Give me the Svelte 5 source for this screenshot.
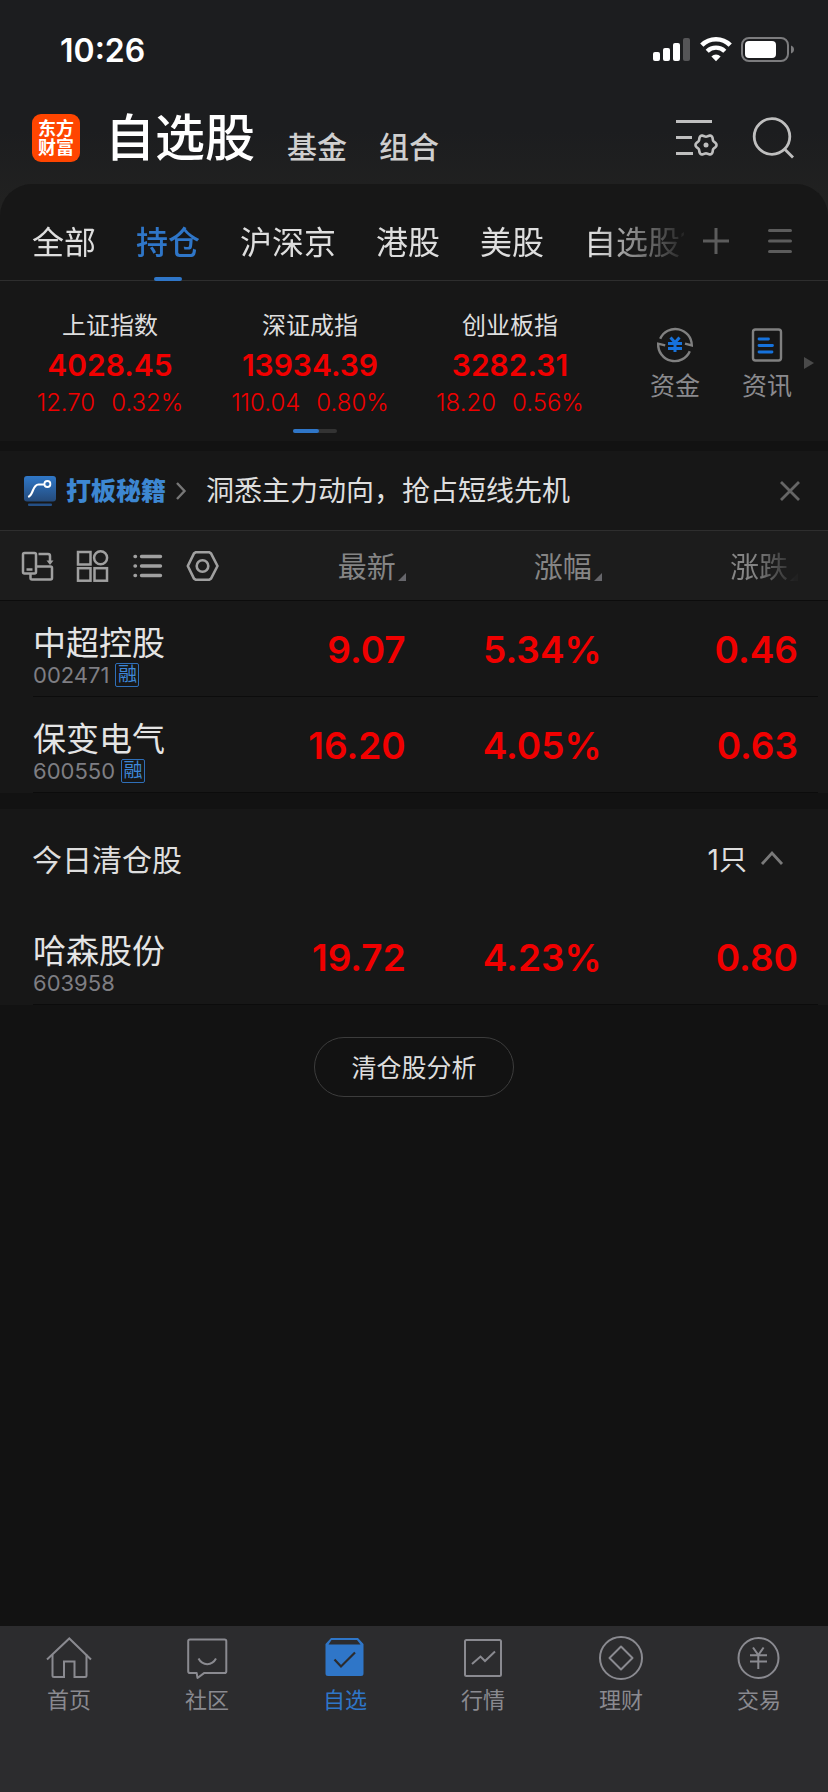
<script lang="ts">
  interface Stock {
    name: string;
    code: string;
    margin: boolean;
    price: string;
    percent: string;
    change: string;
  }

  const groups = ['全部', '持仓', '沪深京', '港股', '美股', '自选股1'];

  const indices = [
    { name: '上证指数', value: '4028.45', change: '12.70', percent: '0.32%' },
    { name: '深证成指', value: '13934.39', change: '110.04', percent: '0.80%' },
    { name: '创业板指', value: '3282.31', change: '18.20', percent: '0.56%' },
  ];

  const holdings: Stock[] = [
    { name: '中超控股', code: '002471', margin: true, price: '9.07', percent: '5.34%', change: '0.46' },
    { name: '保变电气', code: '600550', margin: true, price: '16.20', percent: '4.05%', change: '0.63' },
  ];

  const cleared: Stock[] = [
    { name: '哈森股份', code: '603958', margin: false, price: '19.72', percent: '4.23%', change: '0.80' },
  ];

  const navItems = ['首页', '社区', '自选', '行情', '理财', '交易'];

  let activeGroup = $state('持仓');
  let activeNav = $state('自选');
  let showBanner = $state(true);
  let expanded = $state(true);

  // six-lobed outline of the settings gear
  const gear =
    Array.from({ length: 72 }, (_, i) => {
      const a = (i * Math.PI) / 36;
      const r = 9.4 + 1.1 * Math.cos(6 * a);
      return `${i ? 'L' : 'M'}${(30 + r * Math.cos(a)).toFixed(2)} ${(26 + r * Math.sin(a)).toFixed(2)}`;
    }).join('') + 'Z';
</script>

{#snippet stockRow(stock: Stock)}
  <tr class="stock">
    <td class="stock-info">
      <div class="stock-name">{stock.name}</div>
      <div class="stock-code">
        <span>{stock.code}</span>
        {#if stock.margin}<span class="badge">融</span>{/if}
      </div>
    </td>
    <td>{stock.price}</td>
    <td>{stock.percent}</td>
    <td class="last">{stock.change}</td>
  </tr>
{/snippet}

{#snippet columns()}
  <colgroup>
    <col class="col-name" />
    <col class="col-price" />
    <col class="col-percent" />
    <col />
  </colgroup>
{/snippet}

<div class="app">
  <header class="top">
    <div class="status">
      <span class="time">10:26</span>
      <div class="status-icons">
        <svg width="38" height="26" viewBox="0 0 38 26" fill="#fff" aria-hidden="true">
          <rect x="0" y="15" width="7" height="9" rx="2" />
          <rect x="10" y="11" width="7" height="13" rx="2" />
          <rect x="20" y="6" width="7" height="18" rx="2" />
          <rect x="30" y="1" width="7" height="23" rx="2" opacity="0.25" />
        </svg>
        <svg width="32" height="26" viewBox="0 0 32 26" aria-hidden="true">
          <path d="M1.800 8.200a20 20 0 0 1 28.400 0" fill="none" stroke="#fff" stroke-width="4.600" />
          <path d="M7.200 14.200a12.600 12.600 0 0 1 17.600 0" fill="none" stroke="#fff" stroke-width="4.400" />
          <path d="M11.400 19.400a6.600 6.600 0 0 1 9.200 0L16 24.200z" fill="#fff" />
        </svg>
        <svg width="54" height="26" viewBox="0 0 54 26" aria-hidden="true">
          <rect x="1" y="1" width="46" height="23" rx="7" fill="none" stroke="#7c7c7e" stroke-width="2" />
          <rect x="4" y="4" width="31" height="17" rx="4" fill="#fff" />
          <path d="M50 8.500c2 .7 3 2.200 3 4s-1 3.300-3 4z" fill="#7c7c7e" />
        </svg>
      </div>
    </div>

    <div class="titlebar">
      <a class="logo" href="#home">东方<br />财富</a>
      <h1>自选股</h1>
      <a class="section-link" href="#fund">基金</a>
      <a class="section-link" href="#combo">组合</a>
      <div class="title-actions">
        <button aria-label="列表设置">
          <svg width="44" height="44" viewBox="0 0 44 44" fill="none" stroke="#bfbfbf" stroke-width="3">
            <path d="M0 2.500h36M0 18.500h16M0 34.500h17" />
            <path d={gear} stroke-width="2.600" />
            <circle cx="30" cy="26" r="2.500" fill="#bfbfbf" stroke="none" />
          </svg>
        </button>
        <button aria-label="搜索">
          <svg width="44" height="44" viewBox="0 0 44 44" fill="none" stroke="#bfbfbf" stroke-width="2.800">
            <circle cx="20" cy="17.500" r="17.800" />
            <path d="M32.500 30l8.500 8.500" />
          </svg>
        </button>
      </div>
    </div>
  </header>

  <main>
    <section class="panel">
      <nav class="groups">
        <div class="group-scroll">
          {#each groups as group (group)}
            <button class="group" class:active={group === activeGroup} onclick={() => (activeGroup = group)}>
              {group}
            </button>
          {/each}
        </div>
        <button class="group-tool" aria-label="新建分组">
          <svg width="28" height="28" viewBox="0 0 28 28" stroke="#5c5c5c" stroke-width="3">
            <path d="M1 14h26M14 1v26" />
          </svg>
        </button>
        <button class="group-tool" aria-label="管理分组">
          <svg width="28" height="28" viewBox="0 0 28 28" stroke="#5c5c5c" stroke-width="3" stroke-linecap="round">
            <path d="M3.500 3.500h21M3.500 14h21M3.500 24.500h21" />
          </svg>
        </button>
      </nav>

      <div class="market">
        <div class="index-area">
          <div class="indices">
            {#each indices as item (item.name)}
              <a class="index" href="#index">
                <span class="index-name">{item.name}</span>
                <span class="index-value">{item.value}</span>
                <span class="index-change"><span>{item.change}</span><span>{item.percent}</span></span>
              </a>
            {/each}
          </div>
          <div class="pager"><span></span></div>
        </div>
        <div class="shortcuts">
          <button class="shortcut">
            <svg width="40" height="40" viewBox="0 0 40 40" fill="none" stroke="#808080" stroke-width="2.400">
              <path d="M5.200 13.800A16.500 16.500 0 0 1 36.800 20.500l-6.800-1.800" />
              <path d="M34.800 26.200A16.500 16.500 0 0 1 3.200 18.700l7 1.600" />
              <path d="M15.500 12.500l4.500 5 4.500-5M13 18.500h14M13 23.500h14M20 17.500v9.500" stroke="#1672dc" stroke-width="3" />
            </svg>
            资金
          </button>
          <button class="shortcut">
            <svg width="40" height="40" viewBox="0 0 40 40" fill="none" stroke="#808080" stroke-width="2.400">
              <rect x="6" y="4.500" width="28" height="31" rx="2.500" />
              <path d="M12 14h9.500M12 20.500h13.500M12 27h13" stroke="#1672dc" stroke-width="2.800" stroke-linecap="round" />
            </svg>
            资讯
          </button>
          <svg class="more" width="10" height="12" viewBox="0 0 10 12" aria-hidden="true">
            <path d="M0 0l10 6-10 6z" fill="#4a4a4a" />
          </svg>
        </div>
      </div>
    </section>

    {#if showBanner}
      <section class="banner">
        <a class="banner-tag" href="#secret">
          <svg width="32" height="30" viewBox="0 0 32 30" aria-hidden="true">
            <defs>
              <linearGradient id="tag" x1="0" y1="0" x2="0" y2="1">
                <stop offset="0" stop-color="#3078c8" />
                <stop offset="1" stop-color="#244a7a" />
              </linearGradient>
            </defs>
            <rect width="32" height="25.500" rx="3" fill="url(#tag)" />
            <rect x="4" y="27.500" width="24" height="2.500" rx="1" fill="#244f85" />
            <path d="M5 20.500C9.500 18.500 8.500 8.500 14.500 8.500h5.500" fill="none" stroke="#fff" stroke-width="2.200" stroke-linecap="round" />
            <circle cx="23.400" cy="8" r="3" fill="none" stroke="#fff" stroke-width="1.800" />
          </svg>
          <span>打板秘籍</span>
          <svg width="10" height="18" viewBox="0 0 10 18" fill="none" stroke="#777" stroke-width="2.400" aria-hidden="true">
            <path d="M1 1l7.500 8L1 17" />
          </svg>
        </a>
        <p>洞悉主力动向，抢占短线先机</p>
        <button aria-label="关闭" onclick={() => (showBanner = false)}>
          <svg width="20" height="20" viewBox="0 0 20 20" stroke="#666" stroke-width="2.800">
            <path d="M1 1l18 18M19 1L1 19" />
          </svg>
        </button>
      </section>
    {/if}

    <table class="list">
      {@render columns()}
      <thead>
        <tr>
          <th>
            <div class="tools">
              <button aria-label="横屏">
                <svg width="32" height="32" viewBox="0 0 32 32" fill="none" stroke="#a0a0a0" stroke-width="2.500">
                  <rect x="2" y="3" width="13" height="20.500" rx="1.500" />
                  <path d="M5.500 19.500h6M9.500 24v4q0 1.500 1.500 1.500h18.500q1.500 0 1.500-1.500v-10q0-1.500-1.500-1.500H15.500M17.500 4h9.500q2 0 2 2v6" />
                  <path d="M25.500 10.500h7L29 15z" fill="#a0a0a0" stroke="none" />
                </svg>
              </button>
              <button aria-label="宫格">
                <svg width="32" height="32" viewBox="0 0 32 32" fill="none" stroke="#a0a0a0" stroke-width="2.500">
                  <rect x="2" y="2" width="12.500" height="12.500" />
                  <circle cx="24.600" cy="7.800" r="6.500" />
                  <rect x="2" y="18.200" width="12.500" height="12.500" />
                  <rect x="18.500" y="18.200" width="12.500" height="12.500" />
                </svg>
              </button>
              <button aria-label="列表">
                <svg width="32" height="32" viewBox="0 0 32 32" stroke="#a0a0a0" stroke-width="3.400" stroke-linecap="round">
                  <path d="M4 6.500h.5M4 16h.5M4 25.500h.5M10.500 6.500h19M10.500 16h19M10.500 25.500h19" />
                </svg>
              </button>
              <button aria-label="设置">
                <svg width="32" height="32" viewBox="0 0 32 32" fill="none" stroke="#a0a0a0" stroke-width="2.600" stroke-linejoin="round">
                  <path d="M10 2.200h13l2 1.200 6.500 12.600-6.500 12.600-2 1.200H10l-2-1.200L1.800 16 8 3.400z" />
                  <circle cx="16.500" cy="16" r="5.800" />
                </svg>
              </button>
            </div>
          </th>
          <th><button class="sort">最新</button></th>
          <th><button class="sort">涨幅</button></th>
          <th class="last"><button class="sort fade">涨跌</button></th>
        </tr>
      </thead>
      <tbody>
        {#each holdings as stock (stock.code)}
          {@render stockRow(stock)}
        {/each}
      </tbody>
    </table>

    <section class="cleared">
      <button class="cleared-head" aria-expanded={expanded} onclick={() => (expanded = !expanded)}>
        <span class="cleared-title">今日清仓股</span>
        <span>{cleared.length}只</span>
        <svg class:closed={!expanded} width="22" height="14" viewBox="0 0 22 14" fill="none" stroke="#7a7a7a" stroke-width="2.800" aria-hidden="true">
          <path d="M1 13L11 2l10 11" />
        </svg>
      </button>
      {#if expanded}
        <table class="list">
          {@render columns()}
          <tbody>
            {#each cleared as stock (stock.code)}
              {@render stockRow(stock)}
            {/each}
          </tbody>
        </table>
      {/if}
    </section>

    <button class="analysis">清仓股分析</button>
  </main>

  <nav class="tabbar">
    {#each navItems as item (item)}
      <button class:active={item === activeNav} onclick={() => (activeNav = item)}>
        <svg width="48" height="48" viewBox="0 0 48 48" fill="none" stroke="currentColor" stroke-width="2" aria-hidden="true">
          {#if item === '首页'}
            <path d="M2 25.500L24.300 4.500 46 25.500" />
            <path d="M7.500 20.500V41.500q0 1.500 1.500 1.500h10V27.500h10.500V43h10.500q1.500 0 1.500-1.500V20.500" />
          {:else if item === '社区'}
            <path d="M7 5.500h34.500q1.800 0 1.800 1.800v30q0 1.800-1.800 1.800H21L14.500 44l-.8-4.900H7q-1.800 0-1.800-1.800v-30q0-1.800 1.800-1.800z" stroke-linejoin="round" />
            <path d="M15.500 24.500c4 7.500 13.500 7.500 17.500 0" />
          {:else if item === '自选'}
            <path fill="currentColor" stroke="none" fill-rule="evenodd" d="M10 4h27l5.500 6v29.500a2.500 2.500 0 0 1-2.500 2.500H7a2.500 2.500 0 0 1-2.500-2.500V10zM10.500 6L7.500 10.500h32L36 6z" />
            <path d="M13.500 25.500l6.500 7 14-14" stroke="#2c2c2e" stroke-width="2.200" />
          {:else if item === '行情'}
            <rect x="6" y="6" width="36" height="36" rx="1.500" />
            <path d="M13 30l8.500-7.500 4.500 4.500 10-9.500" />
          {:else if item === '理财'}
            <circle cx="24" cy="24" r="21" />
            <path d="M24 12.500L35.500 24 24 35.500 12.500 24z" stroke-linejoin="round" />
          {:else}
            <circle cx="23.500" cy="24" r="20" />
            <path d="M18 13.500l5.300 7.500 5.300-7.500M15 21.200h17M15 27.500h17M23.300 21v14" />
          {/if}
        </svg>
        <span>{item}</span>
      </button>
    {/each}
  </nav>
</div>

<style>
  :global(body) {
    background: #121212;
  }

  .app {
    display: flex;
    flex-direction: column;
    min-height: 100vh;
    font-family: Inter, 'Noto Sans CJK SC', sans-serif;
    color: #dedede;
    background: #121212;
  }

  button {
    padding: 0;
    border: none;
    background: none;
    color: inherit;
    font: inherit;
    cursor: pointer;
  }

  a {
    color: inherit;
    text-decoration: none;
  }

  svg {
    display: block;
    flex: none;
    overflow: visible;
  }

  .top {
    height: 216px;
    background: linear-gradient(#1c1d1f 60%, #222221);
  }

  .status {
    display: flex;
    align-items: center;
    justify-content: space-between;
    height: 100px;
    padding: 0 33px 0 60px;
  }

  .time {
    font-size: 32px;
    font-weight: 600;
    color: #fff;
  }

  .status-icons {
    display: flex;
    gap: 9px;
  }

  .titlebar {
    display: flex;
    align-items: flex-end;
    height: 66px;
    padding: 0 32px;
  }

  .logo {
    width: 48px;
    height: 48px;
    margin-bottom: 4px;
    padding-top: 5px;
    box-sizing: border-box;
    border-radius: 9px;
    background: #ff4500;
    color: #fff;
    font-size: 18px;
    font-weight: 700;
    line-height: 19px;
    text-align: center;
  }

  h1 {
    margin: 0 0 0 25px;
    font-size: 50px;
    font-weight: 500;
    line-height: 56px;
    color: #fff;
  }

  .section-link {
    margin-left: 32px;
    font-size: 30px;
    font-weight: 500;
    line-height: 38px;
    color: #cfcfcf;
  }

  .title-actions {
    display: flex;
    gap: 32px;
    margin-left: auto;
    margin-bottom: 3px;
  }

  .panel {
    margin-top: -32px;
    border-radius: 32px 32px 0 0;
    background: #171717;
  }

  .groups {
    display: flex;
    align-items: flex-start;
    gap: 36px;
    height: 96px;
    padding: 0 34px 0 32px;
    border-bottom: 1px solid #2e2e2e;
  }

  .group-scroll {
    display: flex;
    flex: 1;
    gap: 40px;
    height: 97px;
    margin-right: -18px;
    overflow: hidden;
    mask-image: linear-gradient(to right, #000 86%, transparent 101%);
  }

  .group {
    position: relative;
    flex: none;
    padding-top: 14px;
    height: 97px;
    box-sizing: border-box;
    font-size: 32px;
  }

  .group.active {
    color: #2f76c8;
    font-weight: 500;
  }

  .group.active::after {
    content: '';
    position: absolute;
    left: 50%;
    bottom: 0;
    width: 28px;
    height: 4px;
    margin-left: -14px;
    border-radius: 2px;
    background: #2f76c8;
  }

  .group-tool {
    margin-top: 43px;
  }

  .market {
    display: flex;
    height: 160px;
  }

  .index-area {
    flex: 1;
    padding-top: 28px;
  }

  .indices {
    display: grid;
    grid-template-columns: repeat(3, 1fr);
    padding: 0 20px 0 10px;
  }

  .index {
    display: flex;
    flex-direction: column;
    align-items: center;
  }

  .index-name {
    font-size: 24px;
    line-height: 34px;
  }

  .index-value {
    color: #f00000;
    font-size: 30px;
    font-weight: 600;
    line-height: 44px;
  }

  .index-change {
    display: flex;
    gap: 16px;
    color: #f00000;
    font-size: 24px;
    font-weight: 300;
    line-height: 32px;
  }

  .pager {
    width: 44px;
    height: 4px;
    margin: 10px auto 0;
    border-radius: 2px;
    background: #333;
  }

  .pager span {
    display: block;
    width: 26px;
    height: 4px;
    border-radius: 2px;
    background: #2f76c8;
  }

  .shortcuts {
    display: flex;
    align-items: flex-start;
    gap: 42px;
    padding: 44px 14px 0 20px;
  }

  .shortcut {
    display: flex;
    flex-direction: column;
    align-items: center;
    gap: 3px;
    color: #8a8a8e;
    font-size: 25px;
    line-height: 36px;
  }

  .more {
    margin-top: 32px;
    margin-left: -30px;
  }

  .banner {
    display: flex;
    align-items: center;
    height: 79px;
    margin-top: 10px;
    padding: 0 28px 0 24px;
    border-bottom: 1px solid #2e2e2e;
    background: #171717;
  }

  .banner-tag {
    display: flex;
    align-items: center;
    gap: 10px;
    color: #3d87d2;
    font-size: 25px;
    font-weight: 900;
    line-height: 32px;
  }

  .banner p {
    flex: 1;
    margin: 0 0 0 20px;
    font-size: 28px;
    line-height: 36px;
  }

  .list {
    width: 100%;
    table-layout: fixed;
    border-collapse: collapse;
    background: #171717;
  }

  .col-name {
    width: 27%;
  }

  .col-price {
    width: 22%;
  }

  .col-percent {
    width: 196px;
  }

  thead tr {
    height: 70px;
    background: linear-gradient(#0c0c0c, #0c0c0c) no-repeat bottom / 100% 1px, #1c1c1c;
  }

  th {
    padding: 0;
    text-align: right;
    font-weight: 400;
  }

  .tools {
    display: flex;
    gap: 23px;
    padding-left: 21px;
  }

  .sort {
    display: inline-flex;
    align-items: flex-end;
    gap: 2px;
    padding-top: 4px;
    color: #858585;
    font-size: 29px;
    line-height: 36px;
  }

  .sort::after {
    content: '';
    margin-bottom: 5px;
    border-left: 8px solid transparent;
    border-bottom: 8px solid #66666b;
  }

  .sort.fade {
    mask-image: linear-gradient(to right, #000 35%, rgba(0, 0, 0, 0.08) 95%);
  }

  .stock {
    height: 96px;
    background: linear-gradient(#0c0c0c, #0c0c0c) no-repeat 33px bottom / calc(100% - 43px) 1px;
  }

  td {
    padding: 0;
    color: #f00000;
    font-size: 37px;
    font-weight: 600;
    text-align: right;
  }

  .last {
    padding-right: 30px;
  }

  .stock-info {
    padding: 14px 0 0 33px;
    color: #e4e4e4;
    font-weight: 400;
    text-align: left;
  }

  .stock-name {
    font-size: 33px;
    line-height: 38px;
  }

  .stock-code {
    display: flex;
    align-items: center;
    gap: 6px;
    height: 26px;
    color: #7e7e83;
    font-size: 22px;
  }

  .badge {
    box-sizing: border-box;
    width: 24px;
    height: 24px;
    border: 1px solid #2f6fb8;
    border-radius: 2px;
    color: #3d87d8;
    font-size: 19px;
    line-height: 22px;
    text-align: center;
  }

  .cleared {
    margin-top: 16px;
    background: #171717;
  }

  .cleared-head {
    display: flex;
    align-items: center;
    width: 100%;
    height: 100px;
    padding: 0 45px 2px 32px;
    font-size: 28px;
  }

  .cleared-title {
    margin-right: auto;
    font-size: 30px;
  }

  .cleared-head svg {
    margin-left: 14px;
  }

  .cleared-head svg.closed {
    transform: rotate(180deg);
  }

  .analysis {
    display: block;
    height: 60px;
    margin: 32px auto;
    padding: 0 36px 2px;
    border: 1px solid #3c3c3c;
    border-radius: 30px;
    font-size: 25px;
  }

  .tabbar {
    display: grid;
    grid-template-columns: repeat(6, 1fr);
    height: 158px;
    margin-top: auto;
    padding-top: 8px;
    background: #2c2c2e;
    color: #8a8a90;
  }

  .tabbar button {
    display: flex;
    flex-direction: column;
    align-items: center;
    gap: 5px;
    font-size: 22px;
    line-height: 26px;
  }

  .tabbar .active {
    color: #2f76c8;
  }
</style>
